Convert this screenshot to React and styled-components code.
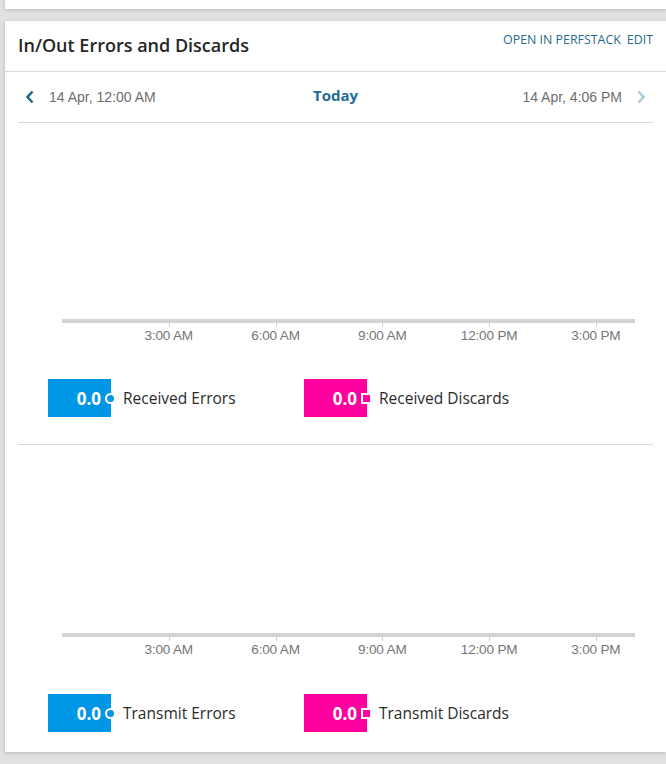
import React from 'react';
import styled, { createGlobalStyle } from 'styled-components';

const GlobalStyle = createGlobalStyle`
  body {
    margin: 0;
    background: #e1e1e1;
    font-family: "Open Sans", "Liberation Sans", sans-serif;
  }
`;

const Page = styled.div`
  display: flex;
  flex-direction: column;
  gap: 12px;
  padding-left: 5px;
  height: 764px;
  overflow: hidden;
`;

const TopCard = styled.div`
  height: 9px;
  background: #fff;
  box-shadow: 0 1px 4px rgba(0, 0, 0, 0.18);
`;

const Card = styled.div`
  background: #fff;
  height: 731px;
  box-shadow: 0 1px 4px rgba(0, 0, 0, 0.18);
  display: flex;
  flex-direction: column;
`;

const Header = styled.div`
  height: 50px;
  border-bottom: 1px solid #d9d9d9;
  display: flex;
  justify-content: space-between;
  padding: 0 13px;
`;

const Title = styled.h2`
  margin: 0;
  padding-top: 12px;
  font-size: 18px;
  font-weight: 600;
  color: #262626;
`;

const Links = styled.div`
  display: flex;
  gap: 6px;
  padding-top: 10px;
`;

const Link = styled.a`
  font-size: 12.4px;
  color: #2a6a89;
  text-decoration: none;
`;

const Body = styled.div`
  padding: 0 13px;
  display: flex;
  flex-direction: column;
`;

const DateNav = styled.div`
  height: 50px;
  border-bottom: 1px solid #d9d9d9;
  display: grid;
  grid-template-columns: 1fr auto 1fr;
  align-items: center;
  padding: 0 7px;
`;

const Side = styled.div`
  display: flex;
  align-items: center;
  gap: 14px;
  justify-content: ${({ $right }) => ($right ? 'flex-end' : 'flex-start')};
`;

const DateText = styled.span`
  font-family: "Liberation Sans", Arial, sans-serif;
  font-size: 14px;
  color: #6e6e6e;
`;

const Today = styled.span`
  font-size: 15px;
  font-weight: 700;
  color: #1f6d92;
  padding-bottom: 4px;
`;

const Section = styled.div`
  display: flex;
  flex-direction: column;
  border-bottom: ${({ $last }) => ($last ? 'none' : '1px solid #d9d9d9')};
`;

const Plot = styled.div`
  height: ${({ $h }) => $h}px;
  margin: 0 18px 0 44px;
  position: relative;
`;

const AxisLine = styled.div`
  position: absolute;
  left: 0;
  right: 0;
  bottom: 0;
  height: 4px;
  background: #d3d3d3;
`;

const Ticks = styled.div`
  height: 30px;
  margin: 0 18px 0 44px;
  position: relative;
`;

const Tick = styled.div`
  position: absolute;
  top: 0;
  width: 1px;
  height: 4px;
  background: #cfcfcf;
`;

const TickLabel = styled.span`
  position: absolute;
  top: 5px;
  transform: translateX(-50%);
  font-family: "Liberation Sans", Arial, sans-serif;
  font-size: 13.6px;
  letter-spacing: -0.2px;
  color: #777;
  white-space: nowrap;
`;

const Legend = styled.div`
  display: flex;
  padding-left: 30px;
  margin-top: ${({ $mt }) => $mt}px;
  margin-bottom: ${({ $mb }) => $mb}px;
`;

const LegendItem = styled.div`
  width: 256px;
  display: flex;
  align-items: center;
  gap: 12px;
`;

const ValueBox = styled.div`
  width: 63px;
  height: 38px;
  background: ${({ $color }) => $color};
  position: relative;
  display: flex;
  align-items: center;
  justify-content: flex-end;
  padding-right: 10px;
  box-sizing: border-box;
  color: #fff;
  font-size: 17px;
  font-weight: 700;
`;

const Marker = styled.span`
  position: absolute;
  right: -5px;
  top: 50%;
  width: 7px;
  height: 7px;
  margin-top: -5.5px;
  border: 2px solid #fff;
  background: ${({ $color }) => $color};
  border-radius: ${({ $round }) => ($round ? '50%' : '0')};
`;

const LegendLabel = styled.span`
  font-size: 15.5px;
  color: #2b2b2b;
`;

const Chevron = ({ dir, color }) => (
  <svg width="10" height="14" viewBox="0 0 10 14">
    <path
      d={dir === 'left' ? 'M7.5 1.5 L2.5 7 L7.5 12.5' : 'M2.5 1.5 L7.5 7 L2.5 12.5'}
      fill="none"
      stroke={color}
      strokeWidth="2.6"
    />
  </svg>
);

const ticks = ['3:00 AM', '6:00 AM', '9:00 AM', '12:00 PM', '3:00 PM'];
const SPAN = 16.1;

function Chart({ plotHeight, legendTop, legendBottom, series, last }) {
  return (
    <Section $last={last}>
      <Plot $h={plotHeight}>
        <AxisLine />
      </Plot>
      <Ticks>
        {ticks.map((t, i) => {
          const left = `${(((i + 1) * 3) / SPAN) * 100}%`;
          return (
            <React.Fragment key={t}>
              <Tick style={{ left }} />
              <TickLabel style={{ left }}>{t}</TickLabel>
            </React.Fragment>
          );
        })}
      </Ticks>
      <Legend $mt={legendTop} $mb={legendBottom}>
        {series.map((s) => (
          <LegendItem key={s.label}>
            <ValueBox $color={s.color}>
              0.0
              <Marker $color={s.color} $round={s.round} />
            </ValueBox>
            <LegendLabel>{s.label}</LegendLabel>
          </LegendItem>
        ))}
      </Legend>
    </Section>
  );
}

export default function App() {
  return (
    <>
      <GlobalStyle />
      <Page>
        <TopCard />
        <Card>
          <Header>
            <Title>In/Out Errors and Discards</Title>
            <Links>
              <Link>OPEN IN PERFSTACK</Link>
              <Link>EDIT</Link>
            </Links>
          </Header>
          <Body>
            <DateNav>
              <Side>
                <Chevron dir="left" color="#1f6a8a" />
                <DateText>14 Apr, 12:00 AM</DateText>
              </Side>
              <Today>Today</Today>
              <Side $right>
                <DateText>14 Apr, 4:06 PM</DateText>
                <Chevron dir="right" color="#a9cbd9" />
              </Side>
            </DateNav>
            <Chart
              plotHeight={200}
              legendTop={26}
              legendBottom={27}
              series={[
                { label: 'Received Errors', color: '#0096e6', round: true },
                { label: 'Received Discards', color: '#ff009f' },
              ]}
            />
            <Chart
              last
              plotHeight={192}
              legendTop={27}
              legendBottom={0}
              series={[
                { label: 'Transmit Errors', color: '#0096e6', round: true },
                { label: 'Transmit Discards', color: '#ff009f' },
              ]}
            />
          </Body>
        </Card>
      </Page>
    </>
  );
}
